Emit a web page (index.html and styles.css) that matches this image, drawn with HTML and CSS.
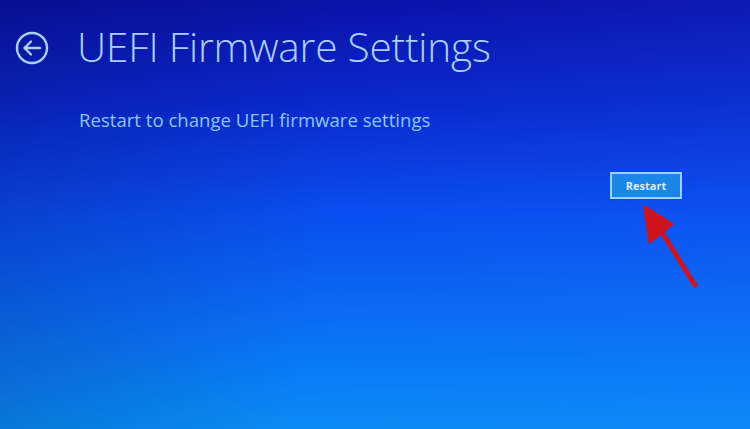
FILE: index.html
```html
<!DOCTYPE html>
<html>
<head>
<meta charset="utf-8">
<link rel="stylesheet" href="styles.css">
</head>
<body>
<div class="screen">
  <div class="header">
    <svg class="back" width="34" height="34" viewBox="0 0 34 34">
      <circle cx="17" cy="17" r="15" fill="none" stroke="#a9cfff" stroke-width="2.4"/>
      <path d="M25 17 H9.5 M16 10.5 L9.5 17 L16 23.5" fill="none" stroke="#a9cfff" stroke-width="2.4" stroke-linecap="round" stroke-linejoin="round"/>
    </svg>
    <h1 class="title">UEFI Firmware Settings</h1>
  </div>
  <p class="subtitle">Restart to change UEFI firmware settings</p>
  <div class="actions">
    <button class="restart">Restart</button>
  </div>
  <svg class="arrow" width="70" height="95" viewBox="0 0 70 95">
    <path d="M55 85 L22 32" stroke="#d0141e" stroke-width="5" stroke-linecap="round"/>
    <path d="M5 7 L32 24 L10 42 Z" fill="#d0141e" stroke="#d0141e" stroke-width="3" stroke-linejoin="round"/>
  </svg>
</div>
</body>
</html>
```
FILE: styles.css
```css
html, body {
  margin: 0;
  padding: 0;
}
.screen {
  position: relative;
  width: 750px;
  height: 429px;
  overflow: hidden;
  background:
    linear-gradient(100deg, rgba(0,0,40,0.18) 0%, rgba(0,0,0,0) 45%, rgba(40,120,255,0.10) 100%),
    linear-gradient(180deg, #0b12a9 0%, #0a2ad0 25%, #0a4ef0 50%, #0a6ef5 75%, #0a8cf6 100%);
  font-family: "Open Sans", "Noto Sans", sans-serif;
  box-sizing: border-box;
  padding: 27px 0 0 15px;
}
.header {
  display: flex;
  align-items: center;
  gap: 28px;
}
.back {
  flex: none;
  margin-top: 2px;
}
.title {
  margin: 0;
  font-weight: 300;
  font-size: 40.6px;
  line-height: 40px;
  color: #a9cfff;
  letter-spacing: -0.2px;
}
.subtitle {
  margin: 41px 0 0 64px;
  font-weight: 400;
  font-size: 18.6px;
  line-height: 24px;
  color: #8cc6ff;
}
.actions {
  display: flex;
  justify-content: flex-end;
  padding-right: 68px;
  margin-top: 40px;
}
.restart {
  width: 72px;
  height: 27px;
  box-sizing: border-box;
  border: 2px solid #95d2ff;
  background: #1a86e8;
  color: #d8ecff;
  font-family: "Open Sans", "Noto Sans", sans-serif;
  font-weight: 700;
  font-size: 11px;
  padding: 0;
}
.arrow {
  position: absolute;
  left: 640px;
  top: 200px;
}
```
